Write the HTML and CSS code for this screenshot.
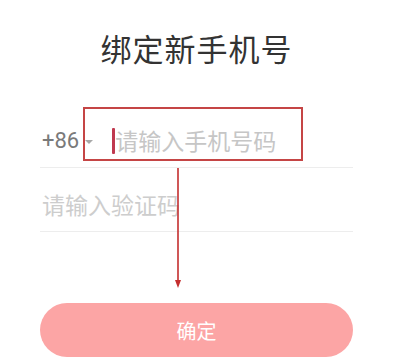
FILE: index.html
```html
<!DOCTYPE html>
<html lang="zh">
<head>
<meta charset="utf-8">
<link rel="stylesheet" href="styles.css">
</head>
<body>
<div class="page">
  <h1 class="title">绑定新手机号</h1>
  <div class="row">
    <span class="code">+86</span>
    <span class="caret-down"></span>
    <span class="cursor"></span>
    <span class="ph">请输入手机号码</span>
  </div>
  <div class="row">
    <span class="ph ph2">请输入验证码</span>
  </div>
  <button class="btn">确定</button>

  <div class="mark"></div>
  <svg class="arrow" width="12" height="122" viewBox="0 0 12 122">
    <line x1="6" y1="0" x2="6" y2="116" stroke="#c42e2e" stroke-width="1.6"/>
    <path d="M3 112 L6 120 L9 112 Z" fill="#c42e2e"/>
  </svg>
</div>
</body>
</html>
```
FILE: styles.css
```css
html, body {
  margin: 0;
  padding: 0;
  background: #ffffff;
}
body {
  width: 398px;
  height: 363px;
  overflow: hidden;
  font-family: "Noto Sans CJK SC", "Noto Sans", Roboto, sans-serif;
}
.page {
  position: relative;
  margin-left: 40px;
  width: 313px;
  padding-top: 28px;
}
.title {
  margin: 0;
  font-size: 31px;
  line-height: 40px;
  font-weight: 400;
  color: #333333;
  text-align: center;
  letter-spacing: 1px;
}
.row {
  display: flex;
  align-items: center;
  height: 53px;
  padding-top: 10px;
  border-bottom: 1px solid #ededed;
}
.row:first-of-type { margin-top: 36px; }
.title + .row { margin-top: 36px; }
.code {
  font-family: Roboto, "Noto Sans", sans-serif;
  font-size: 22px;
  color: #7a7a7a;
  margin-left: 2px;
}
.caret-down {
  width: 0;
  height: 0;
  border-left: 4px solid transparent;
  border-right: 4px solid transparent;
  border-top: 4px solid #a8a8a8;
  margin-left: 6px;
  margin-top: 2px;
}
.cursor {
  width: 3px;
  height: 26px;
  background: #c0394f;
  margin-left: 19px;
  border-radius: 1px;
}
.ph {
  font-size: 23px;
  color: #c6c6c6;
  margin-left: 0px;
  line-height: 1;
}
.ph2 {
  color: #cdcdcd;
  margin-left: 2px;
}
.btn {
  display: block;
  width: 313px;
  height: 54px;
  margin-top: 71px;
  border: none;
  border-radius: 27px;
  background: #fca5a5;
  color: #ffffff;
  font-family: "Noto Sans CJK SC", sans-serif;
  font-size: 20px;
  padding: 0;
}
.mark {
  position: absolute;
  left: 43px;
  top: 107px;
  width: 216px;
  height: 50px;
  border: 2px solid #c54545;
}
.arrow {
  position: absolute;
  left: 132px;
  top: 168px;
}
```
